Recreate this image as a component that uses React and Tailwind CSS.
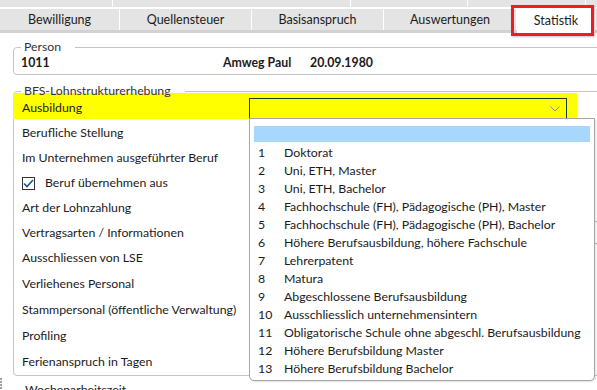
const TOP_TABS = [112, 237, 116, 117];
const TABS = [
  { label: "Bewilligung", w: "w-[119px]" },
  { label: "Quellensteuer", w: "w-[131px]" },
  { label: "Basisanspruch", w: "w-[131px]" },
  { label: "Auswertungen", w: "w-[132px]" },
];

const OPTIONS = [
  ["1", "Doktorat"],
  ["2", "Uni, ETH, Master"],
  ["3", "Uni, ETH, Bachelor"],
  ["4", "Fachhochschule (FH), Pädagogische (PH), Master"],
  ["5", "Fachhochschule (FH), Pädagogische (PH), Bachelor"],
  ["6", "Höhere Berufsausbildung, höhere Fachschule"],
  ["7", "Lehrerpatent"],
  ["8", "Matura"],
  ["9", "Abgeschlossene Berufsausbildung"],
  ["10", "Ausschliesslich unternehmensintern"],
  ["11", "Obligatorische Schule ohne abgeschl. Berufsausbildung"],
  ["12", "Höhere Berufsbildung Master"],
  ["13", "Höhere Berufsbildung Bachelor"],
];

function Row({ h, children }) {
  return <div className={`flex items-center whitespace-nowrap pl-[8px] ${h}`}>{children}</div>;
}

export default function App() {
  return (
    <div className="relative h-[390px] w-[597px] overflow-hidden bg-white font-['Lato',sans-serif] text-[12.3px] text-[#1b1b1b]">
      {/* tab strip, first row is mostly scrolled off */}
      <div className="flex h-[7px] gap-[1px]">
        {TOP_TABS.map((w, i) => (
          <div key={i} className="bg-[#e4e4e4]" style={{ width: w }} />
        ))}
        <div className="flex-1 bg-[#e4e4e4]" />
      </div>
      <div className="mt-[2px] flex h-[21px] items-start gap-[1px] text-[12.5px]">
        {TABS.map((t) => (
          <div key={t.label} className={`flex h-[21px] items-center justify-center bg-[#e4e4e4] pt-[1px] ${t.w}`}>
            {t.label}
          </div>
        ))}
        <div className="relative z-10 flex h-[24px] w-[78px] items-center justify-center bg-white">Statistik</div>
        <div className="h-[21px] flex-1 bg-[#e4e4e4]" />
      </div>
      <div className="h-[3px] bg-[#d2d2d2]" />

      {/* Person */}
      <fieldset className="ml-[13px] mt-[7px] w-[640px] rounded-[4px] border border-[#c4c4c4] pb-[2px] pl-[7px]">
        <legend className="px-[3px] pr-[14px] leading-[14px] text-[#333]">Person</legend>
        <div className="flex h-[18px] items-center font-bold">
          <span className="w-[202px]">1011</span>
          <span className="w-[87px]">Amweg Paul</span>
          <span>20.09.1980</span>
        </div>
      </fieldset>

      {/* BFS */}
      <fieldset className="ml-[13px] mt-[9px] w-[640px] rounded-[4px] border border-[#c4c4c4]">
        <legend className="ml-[7px] px-[3px] pr-[14px] leading-[14px] text-[#333]">BFS-Lohnstrukturerhebung</legend>
        <div className="-ml-[1px] -mt-[5px] flex h-[26px] w-[564px] items-end bg-[#ffff00]">
          <div className="flex h-[21px] w-[236px] items-center pl-[9px]">Ausbildung</div>
          <div className="flex h-[21px] w-[318px] items-center justify-end border border-[#1d3a1d] pr-[6px]">
            <svg width="10" height="6" viewBox="0 0 10 6" fill="none" stroke="#8a8a8a" strokeWidth="1">
              <path d="M0.5 0.5 L5 5 L9.5 0.5" />
            </svg>
          </div>
        </div>
        <div className="mt-[2px]" />
        <Row h="h-[25px]">Berufliche Stellung</Row>
        <Row h="h-[25px]">Im Unternehmen ausgeführter Beruf</Row>
        <Row h="h-[25px]">
          <span className="flex h-[13px] w-[13px] items-center justify-center border border-[#333]">
            <svg width="11" height="9" viewBox="0 0 11 9" fill="none" stroke="#1f4e9c" strokeWidth="1.6">
              <path d="M1 4.5 L4 7.5 L10 1" />
            </svg>
          </span>
          <span className="ml-[10px]">Beruf übernehmen aus</span>
        </Row>
        <Row h="h-[25px]">Art der Lohnzahlung</Row>
        <div className="flex h-[25px] items-start">
          <div className="flex h-[25px] w-[235px] items-center whitespace-nowrap pl-[8px]">Vertragsarten / Informationen</div>
          <div className="h-[23px] w-[400px] border border-[#b8b8b8]" />
        </div>
        <Row h="h-[25px]">Ausschliessen von LSE</Row>
        <Row h="h-[26px]">Verliehenes Personal</Row>
        <Row h="h-[26px]">Stammpersonal (öffentliche Verwaltung)</Row>
        <Row h="h-[27px]">Profiling</Row>
        <Row h="h-[25px]">Ferienanspruch in Tagen</Row>
      </fieldset>

      <div className="flex items-start">
        <div className="flex w-[3px] flex-col gap-[1px] pt-[2px]">
          {[0, 1, 2, 3, 4].map((i) => (
            <span key={i} className="h-[2px] w-[2px] bg-[#a0a0a0]" />
          ))}
        </div>
        <div className="ml-[22px] mt-[7px] leading-[14px]">Wochenarbeitszeit</div>
      </div>

      {/* open dropdown of Ausbildung */}
      <div className="absolute left-[249px] top-[118px] z-20 h-[263px] w-[346px] rounded-b-[5px] border border-[#a6a6a6] bg-white px-[4px] pt-[7px] shadow-[1px_1px_2px_rgba(0,0,0,0.12)]">
        <div className="h-[16px] bg-[#a6d8fd]" />
        <div className="mt-[2px]">
          {OPTIONS.map(([n, label]) => (
            <div key={n} className="flex h-[18px] items-center whitespace-nowrap">
              <span className="w-[30px] pl-[4px]">{n}</span>
              <span>{label}</span>
            </div>
          ))}
        </div>
      </div>

      {/* red annotation around selected tab */}
      <div className="absolute left-[511px] top-[5px] z-30 h-[31px] w-[83px] border-[3px] border-[#ee1c24] shadow-[1px_1px_2px_rgba(0,0,0,0.25)]" />
    </div>
  );
}
